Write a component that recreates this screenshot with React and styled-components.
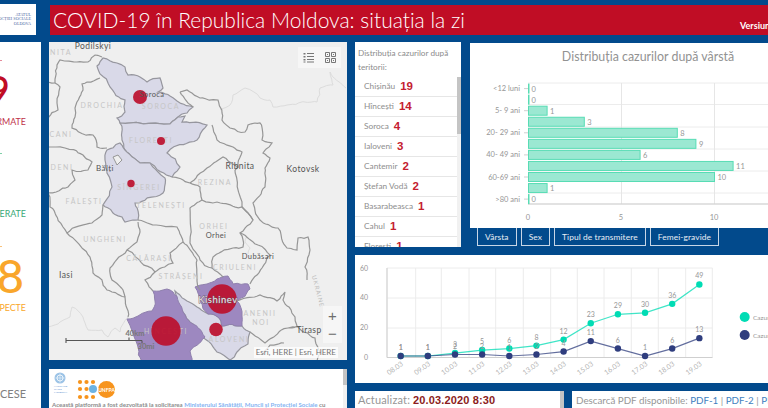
import styled, { createGlobalStyle } from "styled-components";

const BLUE = "#024a8c";
const RED = "#c00d25";
const TEAL = "#00dcb4";
const NAVY = "#2f3d7e";

const GlobalStyle = createGlobalStyle`
  html, body { margin: 0; padding: 0; background: ${BLUE}; }
  * { box-sizing: border-box; }
`;

const Page = styled.div`
  width: 768px;
  height: 408px;
  overflow: hidden;
  background: ${BLUE};
  font-family: Lato, "Liberation Sans", sans-serif;
  color: #6e6e6e;
`;

const TopBar = styled.header`
  display: flex;
  height: 42px;
  padding-top: 4px;
  gap: 14px;
`;

const LogoBox = styled.div`
  width: 36px;
  height: 31px;
  background: #fff;
  display: flex;
  flex-direction: column;
  justify-content: center;
  align-items: flex-end;
  padding-right: 5px;
  overflow: hidden;
  font-family: "Liberation Serif", serif;
  font-size: 4.2px;
  line-height: 4.6px;
  color: #4a63a0;
  white-space: nowrap;
`;

const TitleBar = styled.div`
  flex: 1;
  height: 30px;
  margin-top: 1px;
  background: ${RED};
  color: #fff;
  display: flex;
  justify-content: space-between;
  padding-left: 3px;
  overflow: hidden;
`;

const Title = styled.h1`
  margin: 0;
  font-size: 21px;
  font-weight: 300;
  line-height: 29px;
  white-space: nowrap;
`;

const Version = styled.span`
  font-size: 9px;
  font-weight: 700;
  line-height: 12px;
  margin-top: 15px;
  width: 28px;
  white-space: nowrap;
`;

const Main = styled.div`
  display: grid;
  grid-template-columns: 41px 298px 413px;
  column-gap: 8px;
  align-items: start;
`;

const StatsPanel = styled.aside`
  height: 366px;
  background: #fff;
  display: flex;
  flex-direction: column;
  align-items: flex-end;
  overflow: hidden;
  white-space: nowrap;
`;

const Tick = styled.div`
  flex: none;
  width: 40px;
  height: 1px;
  margin-top: ${(p) => p.$top}px;
  margin-right: 39px;
  background: ${(p) => p.$color};
`;

const BigNumber = styled.div`
  font-size: ${(p) => p.$size}px;
  line-height: ${(p) => p.$size}px;
  margin-top: ${(p) => p.$top}px;
  margin-right: ${(p) => p.$right}px;
  color: ${(p) => p.$color};
  font-weight: 500;
`;

const StatLabel = styled.div`
  font-size: ${(p) => p.$size || 8.9}px;
  line-height: ${(p) => p.$height || 10}px;
  margin-top: ${(p) => p.$top}px;
  margin-right: 15px;
  color: ${(p) => p.$color};
`;

const CenterColumn = styled.div`
  display: flex;
  flex-direction: column;
  gap: 9px;
`;

const MapPanel = styled.section`
  position: relative;
  height: 318px;
  background: #efefef;
  overflow: hidden;

  svg { display: block; }
`;

const MapTools = styled.div`
  position: absolute;
  top: 5px;
  right: 6px;
  width: 43px;
  height: 21px;
  background: #f6f6f6;
  display: flex;
  align-items: center;
  justify-content: space-around;
`;

const ZoomBox = styled.div`
  position: absolute;
  right: 5px;
  top: 264px;
  width: 19px;
  height: 37px;
  background: #f6f6f6;
  display: flex;
  flex-direction: column;
  align-items: center;
  justify-content: space-around;
  font-family: "Liberation Sans", sans-serif;
  font-size: 15px;
  line-height: 15px;
  color: #6e6e6e;
`;

const Attribution = styled.div`
  position: absolute;
  right: 9px;
  bottom: 2px;
  padding: 0 2px;
  background: rgba(255, 255, 255, 0.75);
  font-size: 8px;
  line-height: 11px;
  color: #757575;
`;

const InfoPanel = styled.section`
  position: relative;
  height: 39px;
  background: #fff;
  overflow: hidden;
  padding: 3px 8px 0 3px;

  svg { display: block; }
`;

const InfoText = styled.p`
  margin: 1px 0 0;
  font-size: 6.1px;
  line-height: 8px;
  font-weight: 700;
  color: #8c8c8c;
  white-space: nowrap;

  a { color: #86b4f2; }
`;

const ScrollTrack = styled.div`
  flex: none;
  width: 4px;
  background: #f1f1f1;
`;

const ScrollThumb = styled.div`
  width: 4px;
  height: ${(p) => p.$height}px;
  background: #c4c4c4;
`;

const OverlayTrack = styled(ScrollTrack)`
  position: absolute;
  top: 0;
  right: 0;
  bottom: 0;
`;

const RightColumn = styled.div`
  display: flex;
  flex-direction: column;
  gap: 8px;
`;

const TopRow = styled.div`
  display: flex;
  gap: 9px;
  height: 205px;
`;

const ListPanel = styled.section`
  width: 106px;
  height: 205px;
  background: #fff;
  display: flex;
  flex-direction: column;
  overflow: hidden;
`;

const ListTitle = styled.div`
  flex: none;
  height: 35px;
  padding: 4px 0 0 3px;
  font-size: 8.2px;
  line-height: 14px;
  color: #8c8c8c;
`;

const ListBody = styled.div`
  flex: 1;
  min-height: 0;
  display: flex;
`;

const Rows = styled.ul`
  flex: 1;
  margin: 0;
  padding: 0;
  list-style: none;
  overflow: hidden;
`;

const Row = styled.li`
  height: 20px;
  padding: 0 0 1px 9px;
  border-bottom: 1px solid #e6e6e6;
  display: flex;
  align-items: center;
  gap: 5px;
  font-size: 8.3px;
  color: #8e8e8e;
  white-space: nowrap;

  b {
    font-family: "Liberation Sans", sans-serif;
    font-size: 11.5px;
    color: #c4202f;
  }
`;

const AgeColumn = styled.div`
  width: 298px;
`;

const AgePanel = styled.section`
  height: 185px;
  margin-top: 1px;
  background: #fff;
  padding-top: 6px;

  svg { display: block; }
`;

const AgeTitle = styled.h2`
  margin: 0;
  padding-left: 58px;
  height: 16px;
  text-align: center;
  font-size: 12.4px;
  font-weight: 400;
  line-height: 16px;
  color: #929292;
`;

const Tabs = styled.nav`
  display: flex;
  gap: 4px;
  padding-left: 7px;
  height: 18px;
`;

const Tab = styled.button`
  padding: 0 7px;
  height: 18px;
  background: ${BLUE};
  border: 1px solid #c8d6e6;
  border-top: none;
  border-radius: 0;
  color: #e8eef5;
  font-family: inherit;
  font-size: 8.4px;
  letter-spacing: 0.1px;
`;

const TrendPanel = styled.section`
  height: 128px;
  background: #fff;

  svg { display: block; }
`;

const BottomRow = styled.div`
  display: flex;
  height: 20px;
`;

const UpdatedBox = styled.div`
  width: 209px;
  background: #fff;
  display: flex;
  justify-content: space-between;
  overflow: hidden;
`;

const UpdatedText = styled.div`
  padding: 1px 0 0 3px;
  font-size: 11px;
  line-height: 16px;
  letter-spacing: 0.15px;
  color: #969696;

  b { color: #8c1c20; font-family: "Liberation Sans", sans-serif; }
`;

const DownloadBox = styled.div`
  flex: 1;
  margin-left: 8px;
  padding: 1px 0 0 4px;
  background: #fff;
  font-size: 9.8px;
  line-height: 16px;
  color: #969696;
  white-space: nowrap;
  overflow: hidden;

  a { color: #3f7fc0; }
`;

// county polygons, in page pixels (the svg viewBox is offset to the panel)
const lightAreas = [
  "97,66 103,58 117,63 125,67 128,75 140,77 147,82 160,78 163,88 158,92 170,96 177,101 193,107 187,113 178,117 170,124 120,123 117,118 125,112 125,100 110,87 100,74",
  "120,123 170,124 178,117 185,116 182,122 207,125 197,140 167,153 180,167 172,177 150,163 140,163 125,150 122,140",
  "107,150 120,143 125,150 140,163 150,163 165,178 163,193 135,203 138,220 125,222 122,217 113,213 103,205 112,187 107,173 105,160",
  "175,291 187,301 197,307 208,314 218,317 222,326 242,326 250,332 248,344 237,352 230,360 217,352 205,339 193,324 183,312",
];

const darkAreas = [
  "195,287 207,284 217,279 228,276 233,284 248,284 250,289 237,301 242,316 242,326 222,326 218,317 208,314 200,301",
  "153,291 167,289 173,292 183,312 193,324 205,337 190,351 192,362 142,362 138,347 127,319 138,316 152,311 155,301",
];

const borders = [
  "48,82 55,83 60,60 77,62 88,62 95,55 102,57",
  "100,78 87,82 82,84 83,90 75,108 75,117 72,128 93,135 97,147 107,148",
  "48,118 58,110 57,103 60,87 55,83",
  "48,147 65,148 83,155 92,162 88,170 72,170 75,180 68,187 48,193",
  "103,205 102,215 92,223 67,233 63,227 50,207 48,193",
  "67,233 90,257 93,273 107,290 112,292 125,297 128,317",
  "138,222 140,232 137,242 127,250 110,268 112,280 123,290 125,297",
  "127,250 155,272 173,263 170,253 183,242 177,227 138,220",
  "183,242 197,260 200,290",
  "155,272 145,280 153,291",
  "235,170 242,207 253,220 240,233 243,247 233,248 213,257 212,268 223,277",
  "253,220 242,207 217,202 202,200 200,187 190,183 172,177",
  "202,200 190,208 190,243 200,260 212,268",
  "180,92 187,90 200,98 218,100 222,120 230,128 245,132 248,125 260,123 262,140 272,143 263,153 270,158 265,168 265,187 253,203 260,220 278,228 287,248 297,250 298,238 308,237 310,250 305,267 307,280",
  "193,107 180,92",
  "212,125 217,140 233,147 242,152 238,167 223,157 207,168 190,183",
  "235,170 238,167",
  "240,233 258,245 270,255 262,268 250,284",
  "237,301 260,295 277,301 285,292 283,300 295,317 297,326 288,328 298,327 315,338 320,352 317,362",
  "250,332 265,343 288,328",
  "262,355 270,345 284,343",
];

const faintLines = [
  "220,110 230,105 233,95 245,88 260,98 270,100 273,107 287,105 317,102 320,88 333,85 330,72 346,88",
  "48,327 60,322 70,317 72,307 83,317 88,330 102,330 108,337 115,328 120,332 128,317",
  "247,236 245,242 250,248 248,254",
];

// same hash for a midpoint whichever way an edge is walked, so shared borders stay together
const jitter = (a, b) => {
  const s = Math.sin(a * 12.9898 + b * 78.233) * 43758.5453;
  return s - Math.floor(s) - 0.5;
};

function splitEdge(a, b, depth) {
  const len = Math.hypot(b[0] - a[0], b[1] - a[1]);
  if (depth === 0 || len < 5) return [a];
  const amp = Math.min(len * 0.22, 4);
  const mx = (a[0] + b[0]) / 2;
  const my = (a[1] + b[1]) / 2;
  const mid = [mx + jitter(mx, my) * amp, my + jitter(my, mx) * amp];
  return [...splitEdge(a, mid, depth - 1), ...splitEdge(mid, b, depth - 1)];
}

function roughen(points, closed) {
  const pts = points.split(" ").map((p) => p.split(",").map(Number));
  const walk = closed ? [...pts, pts[0]] : pts;
  const out = [];
  for (let i = 0; i < walk.length - 1; i++) out.push(...splitEdge(walk[i], walk[i + 1], 3));
  if (!closed) out.push(walk[walk.length - 1]);
  return out.map((p) => `${p[0].toFixed(1)},${p[1].toFixed(1)}`).join(" ");
}

const cases = [
  { x: 140, y: 97, r: 7 },
  { x: 161, y: 141, r: 4 },
  { x: 131, y: 183.5, r: 3.7 },
  { x: 222, y: 299, r: 14.7 },
  { x: 166, y: 331, r: 14.7 },
  { x: 216, y: 329.5, r: 6.8 },
];

const regionLabels = [
  ["NITA", 61, 55],
  ["DROCHIA", 102, 108],
  ["SOROCA", 161, 109],
  ["CANI", 61, 137],
  ["FLOREȘTI", 151, 143],
  ["DENI", 62, 170],
  ["REZINA", 215, 185],
  ["SÎNGEREI", 139, 190],
  ["FĂLEȘTI", 84, 204],
  ["TELENEȘTI", 161, 208],
  ["UNGHENI", 105, 242],
  ["ORHEI", 214, 229],
  ["CRIULENI", 235, 270],
  ["CĂLĂRAȘI", 149, 261],
  ["STRĂȘENI", 181, 279],
  ["ANENII", 260, 316],
  ["NOI", 261, 325],
  ["ALOVENI", 229, 342],
  ["HÎNCEȘTI", 166, 334],
];

const cityLabels = [
  ["Podilskyi", 93, 49, 8.5],
  ["Soroca", 152, 97, 7.5],
  ["Bălți", 105, 171, 8],
  ["Ribnita", 240, 169, 8.5],
  ["Kotovsk", 303, 172, 8.5],
  ["Orhei", 216, 238, 7.5],
  ["Dubăsari", 258, 259, 7.5],
  ["Iasi", 66, 278, 8.5],
  ["Tirasp", 309, 333, 8.5],
];

function MapDrawing() {
  return (
    <svg width="298" height="318" viewBox="49 42 298 318" fontFamily="Lato, sans-serif">
      {faintLines.map((points) => (
        <polyline key={points} points={roughen(points)} fill="none" stroke="#dcdcdc" strokeWidth="1" />
      ))}
      {lightAreas.map((points) => (
        <polygon key={points} points={roughen(points, true)} fill="#d9d9e8" stroke="#96969e" strokeWidth="1.2" />
      ))}
      {darkAreas.map((points) => (
        <polygon key={points} points={roughen(points, true)} fill="#9d88c0" stroke="#8f80ad" strokeWidth="1" />
      ))}
      {borders.map((points) => (
        <polyline key={points} points={roughen(points)} fill="none" stroke="#969696" strokeWidth="1.2" />
      ))}
      <polygon points="113,157 118,155 122,160 117,165" fill="#efefef" stroke="#969696" />
      {regionLabels.map(([name, x, y]) => (
        <text key={name} x={x} y={y} textAnchor="middle" fontSize="7" letterSpacing="1.6" fill="#c6c6c6">
          {name}
        </text>
      ))}
      {cases.map((c) => (
        <circle key={c.x} cx={c.x} cy={c.y} r={c.r} fill="#bc0f2c" fillOpacity="0.92" />
      ))}
      <text x="316" y="292" fontSize="6" letterSpacing="1" fill="#bbb" transform="rotate(75 316 292)" textAnchor="middle">
        UKRAINE
      </text>
      {cityLabels.map(([name, x, y, size]) => (
        <text key={name} x={x} y={y} textAnchor="middle" fontSize={size} letterSpacing="0.4" fill="#555">
          {name}
        </text>
      ))}
      <text
        x="218"
        y="303"
        textAnchor="middle"
        fontSize="9.5"
        letterSpacing="0.5"
        fill="#f0e6e8"
        stroke="#6a5a6a"
        strokeWidth="0.8"
        paintOrder="stroke"
      >
        Kishinev
      </text>
      <path d="M66 338v5M66 340.5h76M129 337.5v3M142 340.5v3" fill="none" stroke="#555" strokeWidth="1.1" />
      <text x="135" y="336" textAnchor="middle" fontSize="7.5" fontWeight="700" fill="#777">40km</text>
      <text x="146" y="349" textAnchor="middle" fontSize="7.5" fontWeight="700" fill="#777">30mi</text>
    </svg>
  );
}

function ListIcon() {
  return (
    <svg width="11" height="11" viewBox="0 0 11 11" fill="none" stroke="#777">
      <path d="M4 1.5h7M4 4.5h7M4 7.5h7M4 10h7" />
      <path d="M.5 1h2v1.5h-2zM.5 4h2v1.5h-2zM.5 7h2v1.5h-2zM.5 9.5h2v1h-2z" fill="#777" stroke="none" />
    </svg>
  );
}

function GridIcon() {
  return (
    <svg width="11" height="11" viewBox="0 0 11 11" fill="none" stroke="#777">
      <path d="M.5.5h4v4h-4zM6.5.5h4v4h-4zM.5 6.5h4v4h-4zM6.5 6.5h4v4h-4z" />
      <path d="M2 2h1v1H2zM8 2h1v1H8zM2 8h1v1H2zM8 8h1v1H8z" fill="#777" stroke="none" />
    </svg>
  );
}

function PartnerLogos() {
  const dots = [
    [28, 10], [34.5, 10], [41, 10],
    [28, 17], [34.5, 17],
    [28, 25], [34.5, 25], [41, 25],
  ];
  return (
    <svg width="70" height="28" viewBox="0 0 70 28" fontFamily="Lato, sans-serif">
      <circle cx="8" cy="6" r="5.5" fill="#9cc3e6" />
      <circle cx="8" cy="6" r="3" fill="none" stroke="#fff" strokeWidth="0.8" />
      <path d="M8 1.5v9M3.5 6h9" stroke="#fff" strokeWidth="0.5" />
      <text x="2" y="15" fontSize="2.6" fill="#5b92cf">NATIUNILE</text>
      <text x="2" y="18" fontSize="2.6" fill="#5b92cf">UNITE</text>
      <text x="2" y="21" fontSize="2.6" fill="#5b92cf">MOLDOVA</text>
      {dots.map(([cx, cy]) => (
        <circle key={`${cx}-${cy}`} cx={cx} cy={cy} r="2.1" fill="#f7941d" />
      ))}
      <circle cx="41" cy="17" r="4" fill="#6db3e3" />
      <circle cx="54.5" cy="17.5" r="8.5" fill="#f7941d" />
      <text x="54.5" y="19.5" textAnchor="middle" fontSize="5" fontWeight="700" fill="#fff">UNFPA</text>
    </svg>
  );
}

const ageRows = [
  { label: "<12 luni", value: 0 },
  { value: 0 },
  { label: "5- 9 ani", value: 1 },
  { value: 3 },
  { label: "20- 29 ani", value: 8 },
  { value: 9 },
  { label: "40- 49 ani", value: 6 },
  { value: 11 },
  { label: "60-69 ani", value: 10 },
  { value: 1 },
  { label: ">80 ani", value: 0 },
];

const AGE_ORIGIN = 528.5;
const AGE_UNIT = 18.6;

function AgeChart() {
  const gridY = [83, 104.5, 127, 149, 171, 193, 204];
  return (
    <svg width="298" height="163" viewBox="470 65 298 163" fontFamily="Lato, sans-serif" fontSize="7.5" fill="#969696">
      {gridY.map((y) => (
        <line key={y} x1="528" x2="768" y1={y} y2={y} stroke="#ececec" />
      ))}
      {[621.5, 714.5].map((x) => (
        <line key={x} x1={x} x2={x} y1="83" y2="204" stroke="#e6e6e6" />
      ))}
      <line x1="528" x2="768" y1="204" y2="204" stroke="#cfcfcf" />
      {[0, 5, 10].map((n) => (
        <text key={n} x={AGE_ORIGIN + n * AGE_UNIT - 0.5} y="220" textAnchor="middle" fontSize="7.5">{n}</text>
      ))}
      {ageRows.map((row, i) => {
        const y = 88.6 + i * 11.05;
        const width = row.value * AGE_UNIT;
        return (
          <g key={i}>
            <rect x={AGE_ORIGIN} y={y - 4.5} width={Math.max(width, 0.5)} height="9" fill="#9be8d2" stroke="#58dcb4" strokeWidth="1" />
            <text x={AGE_ORIGIN + width + 3} y={y + 3}>{row.value}</text>
            {row.label && (
              <>
                <line x1="524" x2="528" y1={y} y2={y} stroke="#cfcfcf" />
                <text x="520" y={y + 2.5} textAnchor="end">{row.label}</text>
              </>
            )}
          </g>
        );
      })}
    </svg>
  );
}

const days = ["08.03", "09.03", "10.03", "11.03", "12.03", "13.03", "14.03", "15.03", "16.03", "17.03", "18.03", "19.03"];
const confirmed = [1, 1, 3, 5, 6, 8, 12, 23, 29, 30, 36, 49];
const recovered = [1, 1, 2, 2, 1, 2, 4, 11, 6, 1, 6, 13];

const dayX = (i) => 400.7 + i * 27.15;
const valueY = (v) => 357.5 - v * 1.49;
const gridLinesX = [387, 415.7, 441.3, 469, 495.7, 523.3, 550.7, 577.3, 604, 631.3, 658.3, 685.7, 712.3];

function Series({ values, color }) {
  return (
    <g>
      <polyline
        points={values.map((v, i) => `${dayX(i)},${valueY(v)}`).join(" ")}
        fill="none"
        stroke={color}
        strokeOpacity="0.75"
        strokeWidth="1.2"
      />
      {values.map((v, i) => (
        <g key={i}>
          <circle cx={dayX(i)} cy={valueY(v)} r="3.2" fill={color} />
          <text x={dayX(i)} y={valueY(v) - 6} textAnchor="middle">{v}</text>
        </g>
      ))}
    </g>
  );
}

function TrendChart() {
  return (
    <svg width="413" height="128" viewBox="355 255 413 128" fontFamily="Lato, sans-serif" fontSize="7" fill="#969696">
      {[268, 298, 328].map((y) => (
        <line key={y} x1="387" x2="712.5" y1={y} y2={y} stroke="#ececec" />
      ))}
      {gridLinesX.map((x) => (
        <line key={x} x1={x} x2={x} y1="268" y2="357.5" stroke="#ececec" />
      ))}
      <line x1="387" x2="712.5" y1="357.5" y2="357.5" stroke="#cfcfcf" />
      <line x1="387" x2="387" y1="268" y2="357.5" stroke="#cfcfcf" />
      {[60, 40, 20, 0].map((n) => (
        <text key={n} x="368" y={valueY(n) + 2.5} textAnchor="end">{n}</text>
      ))}
      {days.map((d, i) => (
        <text key={d} x={dayX(i) + 3} y="365" textAnchor="end" fill="#b4b4b4" transform={`rotate(-35 ${dayX(i) + 3} 365)`}>
          {d}
        </text>
      ))}
      <Series values={confirmed} color={TEAL} />
      <Series values={recovered} color={NAVY} />
      <circle cx="744.7" cy="317" r="5" fill={TEAL} />
      <circle cx="744.7" cy="335" r="5" fill={NAVY} />
      <text x="753" y="319.5" fontSize="6.5">Cazuri confirmate</text>
      <text x="753" y="337.5" fontSize="6.5">Cazuri recuperate</text>
    </svg>
  );
}

const territories = [
  ["Chișinău", 19],
  ["Hîncești", 14],
  ["Soroca", 4],
  ["Ialoveni", 3],
  ["Cantemir", 2],
  ["Ștefan Vodă", 2],
  ["Basarabeasca", 1],
  ["Cahul", 1],
  ["Florești", 1],
];

export default function App() {
  return (
    <Page>
      <GlobalStyle />
      <TopBar>
        <LogoBox>
          <span>ATATUL</span>
          <span>OCȚIEI SOCIALE</span>
          <span>OLDOVA</span>
        </LogoBox>
        <TitleBar>
          <Title>COVID-19 în Republica Moldova: situația la zi</Title>
          <Version>Versiunea</Version>
        </TitleBar>
      </TopBar>
      <Main>
        <StatsPanel>
          <Tick $top={18} $color="#e58a9a" />
          <BigNumber $size={40} $top={9} $right={31} $color={RED}>19</BigNumber>
          <StatLabel $top={7} $color="#c0324a">CONFIRMATE</StatLabel>
          <Tick $top={26} $color="#7fd0a8" />
          <StatLabel $top={55} $color="#3aa878">RECUPERATE</StatLabel>
          <Tick $top={27} $color="#f9c27c" />
          <BigNumber $size={47} $top={5} $right={17} $color="#f9a62b">48</BigNumber>
          <StatLabel $top={4} $color="#f9a62b">SUSPECTE</StatLabel>
          <StatLabel $top={75} $size={11} $height={12} $color="#808080">PROCESE</StatLabel>
        </StatsPanel>

        <CenterColumn>
          <MapPanel>
            <MapDrawing />
            <MapTools>
              <ListIcon />
              <GridIcon />
            </MapTools>
            <ZoomBox>
              <span>+</span>
              <span>−</span>
            </ZoomBox>
            <Attribution>Esri, HERE | Esri, HERE</Attribution>
          </MapPanel>
          <InfoPanel>
            <PartnerLogos />
            <InfoText>
              Această platformă a fost dezvoltată la solicitarea <a>Ministerului Sănătății, Muncii și Protecției Sociale</a> cu
            </InfoText>
            <OverlayTrack>
              <ScrollThumb $height={16} />
            </OverlayTrack>
          </InfoPanel>
        </CenterColumn>

        <RightColumn>
          <TopRow>
            <ListPanel>
              <ListTitle>Distribuția cazurilor după teritorii:</ListTitle>
              <ListBody>
                <Rows>
                  {territories.map(([name, count]) => (
                    <Row key={name}>
                      {name} <b>{count}</b>
                    </Row>
                  ))}
                </Rows>
                <ScrollTrack>
                  <ScrollThumb $height={57} />
                </ScrollTrack>
              </ListBody>
            </ListPanel>
            <AgeColumn>
              <AgePanel>
                <AgeTitle>Distribuția cazurilor după vârstă</AgeTitle>
                <AgeChart />
              </AgePanel>
              <Tabs>
                <Tab>Vârsta</Tab>
                <Tab>Sex</Tab>
                <Tab>Tipul de transmitere</Tab>
                <Tab>Femei-gravide</Tab>
              </Tabs>
            </AgeColumn>
          </TopRow>
          <TrendPanel>
            <TrendChart />
          </TrendPanel>
          <BottomRow>
            <UpdatedBox>
              <UpdatedText>Actualizat: <b>20.03.2020 8:30</b></UpdatedText>
              <ScrollTrack>
                <ScrollThumb $height={20} />
              </ScrollTrack>
            </UpdatedBox>
            <DownloadBox>
              Descarcă PDF disponibile: <a>PDF-1</a> | <a>PDF-2</a> | <a>PDF-3</a>
            </DownloadBox>
          </BottomRow>
        </RightColumn>
      </Main>
    </Page>
  );
}
